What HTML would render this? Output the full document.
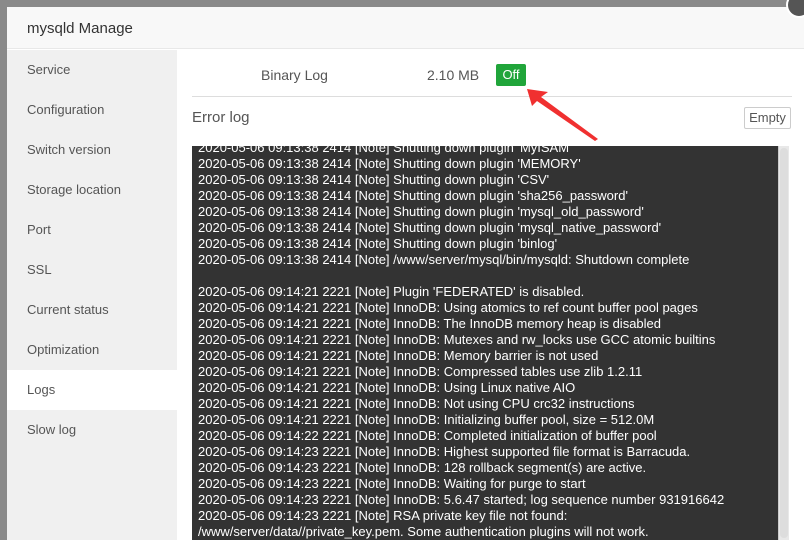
<!DOCTYPE html>
<html><head><meta charset="utf-8"><style>
*{margin:0;padding:0;box-sizing:border-box}
body{width:804px;height:540px;overflow:hidden;background:#8a8a8a;font-family:"Liberation Sans",sans-serif;position:relative}
.dlg{position:absolute;left:7px;top:7px;width:797px;height:533px;background:#fff}
.hd{position:absolute;left:0;top:0;width:797px;height:42px;background:#f8f8f8;border-bottom:1px solid #e8e8e8;font-size:15px;color:#333;padding:13px 0 0 20px}
.side{position:absolute;left:0;top:43px;width:170px;height:490px;background:#f0f0f0}
.side div{height:40px;line-height:40px;padding-left:20px;font-size:13px;color:#555}
.side div.on{background:#fff}
.t{position:absolute;font-size:14px;color:#555}
.log{position:absolute;left:185px;top:139px;width:597px;height:394px;background:#333;color:#fff;font-size:13px;line-height:16px;padding:0 0 0 6px;overflow:hidden;white-space:pre}
.log .in{margin-top:-6px}
.sb{position:absolute;left:771px;top:139px;width:11px;height:394px;background:#e8e8e8;border-left:1px solid #ccc}
</style></head><body>
<div class="dlg">
<div class="hd">mysqld Manage</div>
<div class="side">
<div>Service</div><div>Configuration</div><div>Switch version</div><div>Storage location</div><div>Port</div><div>SSL</div><div>Current status</div><div>Optimization</div><div class="on">Logs</div><div>Slow log</div>
</div>
<div class="t" style="left:254px;top:60px">Binary Log</div>
<div class="t" style="left:420px;top:60px">2.10 MB</div>
<div style="position:absolute;left:489px;top:57px;width:30px;height:22px;background:#20a53a;border-radius:2px;color:#fff;font-size:13px;line-height:22px;text-align:center">Off</div>
<div style="position:absolute;left:185px;top:89px;width:600px;height:1px;background:#ddd"></div>
<div class="t" style="left:185px;top:102px;font-size:15px">Error log</div>
<div style="position:absolute;left:737px;top:100px;width:47px;height:22px;border:1px solid #ccc;border-radius:2px;font-size:13px;color:#555;line-height:20px;text-align:center">Empty</div>
<div class="log"><div class="in">2020-05-06 09:13:38 2414 [Note] Shutting down plugin 'MyISAM'
2020-05-06 09:13:38 2414 [Note] Shutting down plugin 'MEMORY'
2020-05-06 09:13:38 2414 [Note] Shutting down plugin 'CSV'
2020-05-06 09:13:38 2414 [Note] Shutting down plugin 'sha256_password'
2020-05-06 09:13:38 2414 [Note] Shutting down plugin 'mysql_old_password'
2020-05-06 09:13:38 2414 [Note] Shutting down plugin 'mysql_native_password'
2020-05-06 09:13:38 2414 [Note] Shutting down plugin 'binlog'
2020-05-06 09:13:38 2414 [Note] /www/server/mysql/bin/mysqld: Shutdown complete

2020-05-06 09:14:21 2221 [Note] Plugin 'FEDERATED' is disabled.
2020-05-06 09:14:21 2221 [Note] InnoDB: Using atomics to ref count buffer pool pages
2020-05-06 09:14:21 2221 [Note] InnoDB: The InnoDB memory heap is disabled
2020-05-06 09:14:21 2221 [Note] InnoDB: Mutexes and rw_locks use GCC atomic builtins
2020-05-06 09:14:21 2221 [Note] InnoDB: Memory barrier is not used
2020-05-06 09:14:21 2221 [Note] InnoDB: Compressed tables use zlib 1.2.11
2020-05-06 09:14:21 2221 [Note] InnoDB: Using Linux native AIO
2020-05-06 09:14:21 2221 [Note] InnoDB: Not using CPU crc32 instructions
2020-05-06 09:14:21 2221 [Note] InnoDB: Initializing buffer pool, size = 512.0M
2020-05-06 09:14:22 2221 [Note] InnoDB: Completed initialization of buffer pool
2020-05-06 09:14:23 2221 [Note] InnoDB: Highest supported file format is Barracuda.
2020-05-06 09:14:23 2221 [Note] InnoDB: 128 rollback segment(s) are active.
2020-05-06 09:14:23 2221 [Note] InnoDB: Waiting for purge to start
2020-05-06 09:14:23 2221 [Note] InnoDB: 5.6.47 started; log sequence number 931916642
2020-05-06 09:14:23 2221 [Note] RSA private key file not found:
/www/server/data//private_key.pem. Some authentication plugins will not work.</div></div>
<div class="sb"><div style="margin:2px 1px;height:390px;background:#ddd;border-radius:4px"></div></div>
</div>
<div style="position:absolute;left:786px;top:-8px;width:26px;height:26px;border-radius:50%;background:#555;border:2px solid #fff"></div>
<svg style="position:absolute;left:0;top:0" width="804" height="540"><polygon points="527,89 548,92 541,97 598,139 595,141 537,101 532,106" fill="#f03030"/></svg>
</body></html>
